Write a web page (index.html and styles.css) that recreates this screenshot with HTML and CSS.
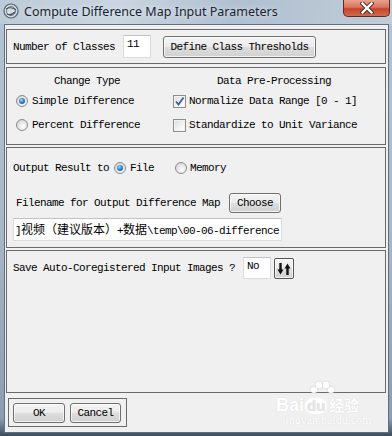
FILE: index.html
```html
<!DOCTYPE html>
<html lang="en">
<head>
    <meta charset="UTF-8">
    <meta name="viewport" content="width=device-width, initial-scale=1.0">
    <title>Compute Difference Map Input Parameters</title>
    <link rel="stylesheet" href="styles.css">
</head>
<body>
    <div class="window">
        <div class="titlebar">
            <svg class="app-icon" width="16" height="16" viewBox="0 0 16 16">
                <circle cx="8" cy="8" r="7" fill="#d8dde3" stroke="#55606c" stroke-width="1.2"/>
                <circle cx="8" cy="8" r="4.5" fill="none" stroke="#6b7785" stroke-width="1"/>
                <path d="M3 6 Q8 3 13 7" fill="none" stroke="#47525e" stroke-width="1.1"/>
                <path d="M4 11 Q8 13 12 9" fill="none" stroke="#47525e" stroke-width="1.1"/>
            </svg>
            <span class="title">Compute Difference Map Input Parameters</span>
            <div class="close-btn">
                <svg width="14" height="12" viewBox="0 0 14 12">
                    <path d="M2.5 1.5 L11.5 10.5 M11.5 1.5 L2.5 10.5" stroke="#4a2a26" stroke-width="4.2" stroke-linecap="square"/>
                    <path d="M2.5 1.5 L11.5 10.5 M11.5 1.5 L2.5 10.5" stroke="#ffffff" stroke-width="2.4" stroke-linecap="square"/>
                </svg>
            </div>
        </div>

        <div class="client">
            <div class="panel classes">
                <span>Number of Classes</span>
                <div class="field classes-field">11</div>
                <div class="btn thresholds-btn">Define Class Thresholds</div>
            </div>

            <div class="panel options">
                <div class="col change-col">
                    <div class="col-head">Change Type</div>
                    <div class="opt"><span class="radio on"></span><span class="radio-text">Simple Difference</span></div>
                    <div class="opt"><span class="radio"></span><span class="radio-text">Percent Difference</span></div>
                </div>
                <div class="col pre-col">
                    <div class="col-head">Data Pre-Processing</div>
                    <div class="opt">
                        <span class="check">
                            <svg width="11" height="11" viewBox="0 0 11 11"><path d="M2 5.5 L4.5 8.5 L9.5 1.5" fill="none" stroke="#3d5fa6" stroke-width="1.8"/></svg>
                        </span>
                        <span class="check-text">Normalize Data Range [0 - 1]</span>
                    </div>
                    <div class="opt"><span class="check"></span><span class="check-text">Standardize to Unit Variance</span></div>
                </div>
            </div>

            <div class="panel output">
                <div class="row out-row">
                    <span>Output Result to</span>
                    <span class="radio on file-radio"></span><span class="radio-text">File</span>
                    <span class="radio memory-radio"></span><span class="memory-text">Memory</span>
                </div>
                <div class="row name-row">
                    <span>Filename for Output Difference Map</span>
                    <div class="btn choose-btn">Choose</div>
                </div>
                <div class="field path-field">]<span class="cjk">视频（建议版本）</span>+<span class="cjk">数据</span>\temp\00-06-difference</div>
            </div>

            <div class="panel save">
                <span>Save Auto-Coregistered Input Images ?</span>
                <div class="field no-field">No</div>
                <div class="btn toggle-btn">
                    <svg width="14" height="14" viewBox="0 0 14 14">
                        <path d="M3.5 1 V8" stroke="#111" stroke-width="2.4"/>
                        <path d="M0.5 7.5 L6.5 7.5 L3.5 12.5 Z" fill="#111"/>
                        <path d="M10.5 13 V6" stroke="#111" stroke-width="2.4"/>
                        <path d="M7.5 6.5 L13.5 6.5 L10.5 1.5 Z" fill="#111"/>
                    </svg>
                </div>
            </div>

            <div class="panel buttons">
                <div class="btn ok-btn">OK</div>
                <div class="btn cancel-btn">Cancel</div>
            </div>

            <div class="watermark">
                <svg class="wm-paw" width="26" height="16" viewBox="0 0 26 16">
                    <circle cx="5" cy="9" r="3" fill="#fff"/>
                    <circle cx="10" cy="4" r="3.2" fill="#fff"/>
                    <circle cx="17" cy="4" r="3.2" fill="#fff"/>
                    <circle cx="22" cy="9" r="3" fill="#fff"/>
                </svg>
                <div class="wm-logo"><span>Bai</span><span class="wm-du">du</span><span class="wm-cn">经验</span></div>
                <div class="wm-url">jingyan.baidu.com</div>
            </div>
        </div>
    </div>
</body>
</html>
```

FILE: styles.css
```css
body {
    margin: 0;
    font-family: "Liberation Mono", "Noto Sans CJK SC", monospace;
    font-size: 11px;
    letter-spacing: -0.6px;
    color: #000;
}
.window {
    width: 392px;
    height: 436px;
    display: flex;
    flex-direction: column;
    background: linear-gradient(to bottom, #c3d0dd 0%, #b3c3d3 6%, #a9b9c9 50%, #8b9db0 96%, #3c4b5c 100%);
    overflow: hidden;
}
.titlebar {
    height: 24px;
    display: flex;
    align-items: flex-start;
    background: linear-gradient(100deg, #bccbd9 0%, #c9d5e0 30%, #b0c0d0 60%, #c0ccd8 100%);
}
.app-icon {
    margin: 3px 0 0 3px;
}
.title {
    margin: 3px 0 0 5px;
    font-family: "Noto Sans", sans-serif;
    font-size: 12.5px;
    letter-spacing: 0;
    color: #1b2533;
    text-shadow: 0 0 6px rgba(255, 255, 255, 0.8);
}
.close-btn {
    margin-left: auto;
    margin-right: 2px;
    width: 47px;
    height: 17px;
    box-sizing: border-box;
    border: 1px solid #5b2b24;
    border-top: none;
    border-radius: 0 0 5px 5px;
    background: linear-gradient(to bottom, #e8a290 0%, #d8745e 45%, #c4432a 55%, #d46b4c 100%);
    display: flex;
    justify-content: center;
    align-items: center;
}
.client {
    position: relative;
    margin: 0 3px 0 4px;
    height: 409px;
    box-sizing: border-box;
    border: 1px solid #5f6f80;
    background: #f0f0f0;
    padding-top: 4px;
}
.panel {
    box-sizing: border-box;
    width: 380px;
    margin-left: 1px;
    border: 1px solid #6a6a6a;
}
.classes {
    height: 35px;
    display: flex;
    align-items: center;
    padding-left: 6px;
}
.field {
    box-sizing: border-box;
    background: #fff;
    border: 1px solid #dcdcdc;
    border-top-color: #c2c2c2;
    padding: 2px 0 0 3px;
    line-height: 12px;
}
.classes-field {
    width: 28px;
    height: 23px;
    margin-left: 8px;
}
.btn {
    box-sizing: border-box;
    display: flex;
    justify-content: center;
    align-items: center;
    border: 1px solid #707070;
    border-radius: 3px;
    background: linear-gradient(to bottom, #f4f4f4 0%, #ebebeb 48%, #dddddd 52%, #d1d1d1 100%);
    box-shadow: inset 0 0 0 1px rgba(255, 255, 255, 0.7);
}
.thresholds-btn {
    width: 153px;
    height: 22px;
    margin-left: 12px;
}
.options {
    height: 78px;
    margin-top: 3px;
    display: grid;
    grid-template-columns: 160px 214px;
    padding-top: 7px;
}
.col-head {
    text-align: center;
    line-height: 12px;
    margin-bottom: 2px;
}
.opt {
    height: 24px;
    display: flex;
    align-items: center;
}
.change-col .opt {
    padding-left: 9px;
}
.pre-col .opt {
    padding-left: 6px;
}
.radio {
    position: relative;
    box-sizing: border-box;
    width: 12px;
    height: 12px;
    border-radius: 50%;
    border: 1px solid #8c8c8c;
    background: radial-gradient(circle at 60% 65%, #ffffff 0%, #e6e6e6 50%, #c9c9c9 100%);
    flex: none;
}
.radio.on::after {
    content: "";
    position: absolute;
    left: 2px;
    top: 2px;
    width: 6px;
    height: 6px;
    border-radius: 50%;
    background: radial-gradient(circle at 40% 35%, #a8dcff 0%, #2d86d6 45%, #0d3f80 100%);
}
.radio-text {
    margin-left: 4px;
}
.check {
    box-sizing: border-box;
    width: 13px;
    height: 13px;
    border: 1px solid #8e8f8f;
    background: linear-gradient(135deg, #dcdcdc 0%, #f4f4f4 60%, #ffffff 100%);
    box-shadow: inset 0 0 0 1px #f4f4f4;
    flex: none;
    display: flex;
    align-items: center;
    justify-content: center;
}
.check-text {
    margin-left: 3px;
}
.output {
    height: 101px;
    margin-top: 2px;
    padding: 13px 0 0 6px;
}
.row {
    display: flex;
    align-items: center;
}
.out-row {
    height: 14px;
}
.file-radio {
    margin-left: 5px;
}
.memory-radio {
    margin-left: 21px;
}
.memory-text {
    margin-left: 3px;
}
.name-row {
    height: 20px;
    margin-top: 18px;
    padding-left: 3px;
}
.choose-btn {
    width: 52px;
    height: 20px;
    margin-left: 9px;
}
.path-field {
    width: 269px;
    height: 23px;
    margin-top: 5px;
    padding: 4px 0 0 1px;
    white-space: nowrap;
    overflow: hidden;
}
.cjk {
    font-family: "Noto Sans CJK SC", sans-serif;
    font-size: 12px;
    letter-spacing: 0;
}
.save {
    height: 143px;
    margin-top: 2px;
    padding: 6px 0 0 6px;
    display: flex;
    align-items: flex-start;
}
.save > span {
    margin-top: 5px;
}
.no-field {
    width: 28px;
    height: 22px;
    margin-left: 8px;
}
.toggle-btn {
    width: 20px;
    height: 21px;
    margin: 1px 0 0 3px;
    border-color: #555;
    border-radius: 2px;
}
.buttons {
    width: 119px;
    height: 29px;
    margin: 5px 0 0 3px;
    padding: 4px 0 0 4px;
    display: flex;
    gap: 5px;
}
.ok-btn {
    width: 52px;
    height: 20px;
}
.cancel-btn {
    width: 51px;
    height: 20px;
}
.watermark {
    position: absolute;
    left: 271px;
    top: 356px;
    color: #ffffff;
    font-family: "Liberation Sans", "Noto Sans CJK SC", sans-serif;
    letter-spacing: 0;
    text-shadow: 0 0 1px #cfcfcf;
}
.wm-paw {
    display: block;
    margin-left: 33px;
    filter: drop-shadow(0 0 1px #cfcfcf);
}
.wm-logo {
    display: flex;
    align-items: baseline;
    height: 16px;
    line-height: 16px;
    font-size: 18px;
    font-weight: bold;
}
.wm-du {
    margin-left: 1px;
    padding: 0 2px;
    border-radius: 8px;
    background: #ffffff;
    color: #e6e6e6;
    font-size: 15px;
}
.wm-cn {
    margin-left: 2px;
    font-size: 15px;
}
.wm-url {
    font-family: "Liberation Serif", serif;
    font-size: 12px;
    line-height: 13px;
    margin: 1px 0 0 6px;
}
```
